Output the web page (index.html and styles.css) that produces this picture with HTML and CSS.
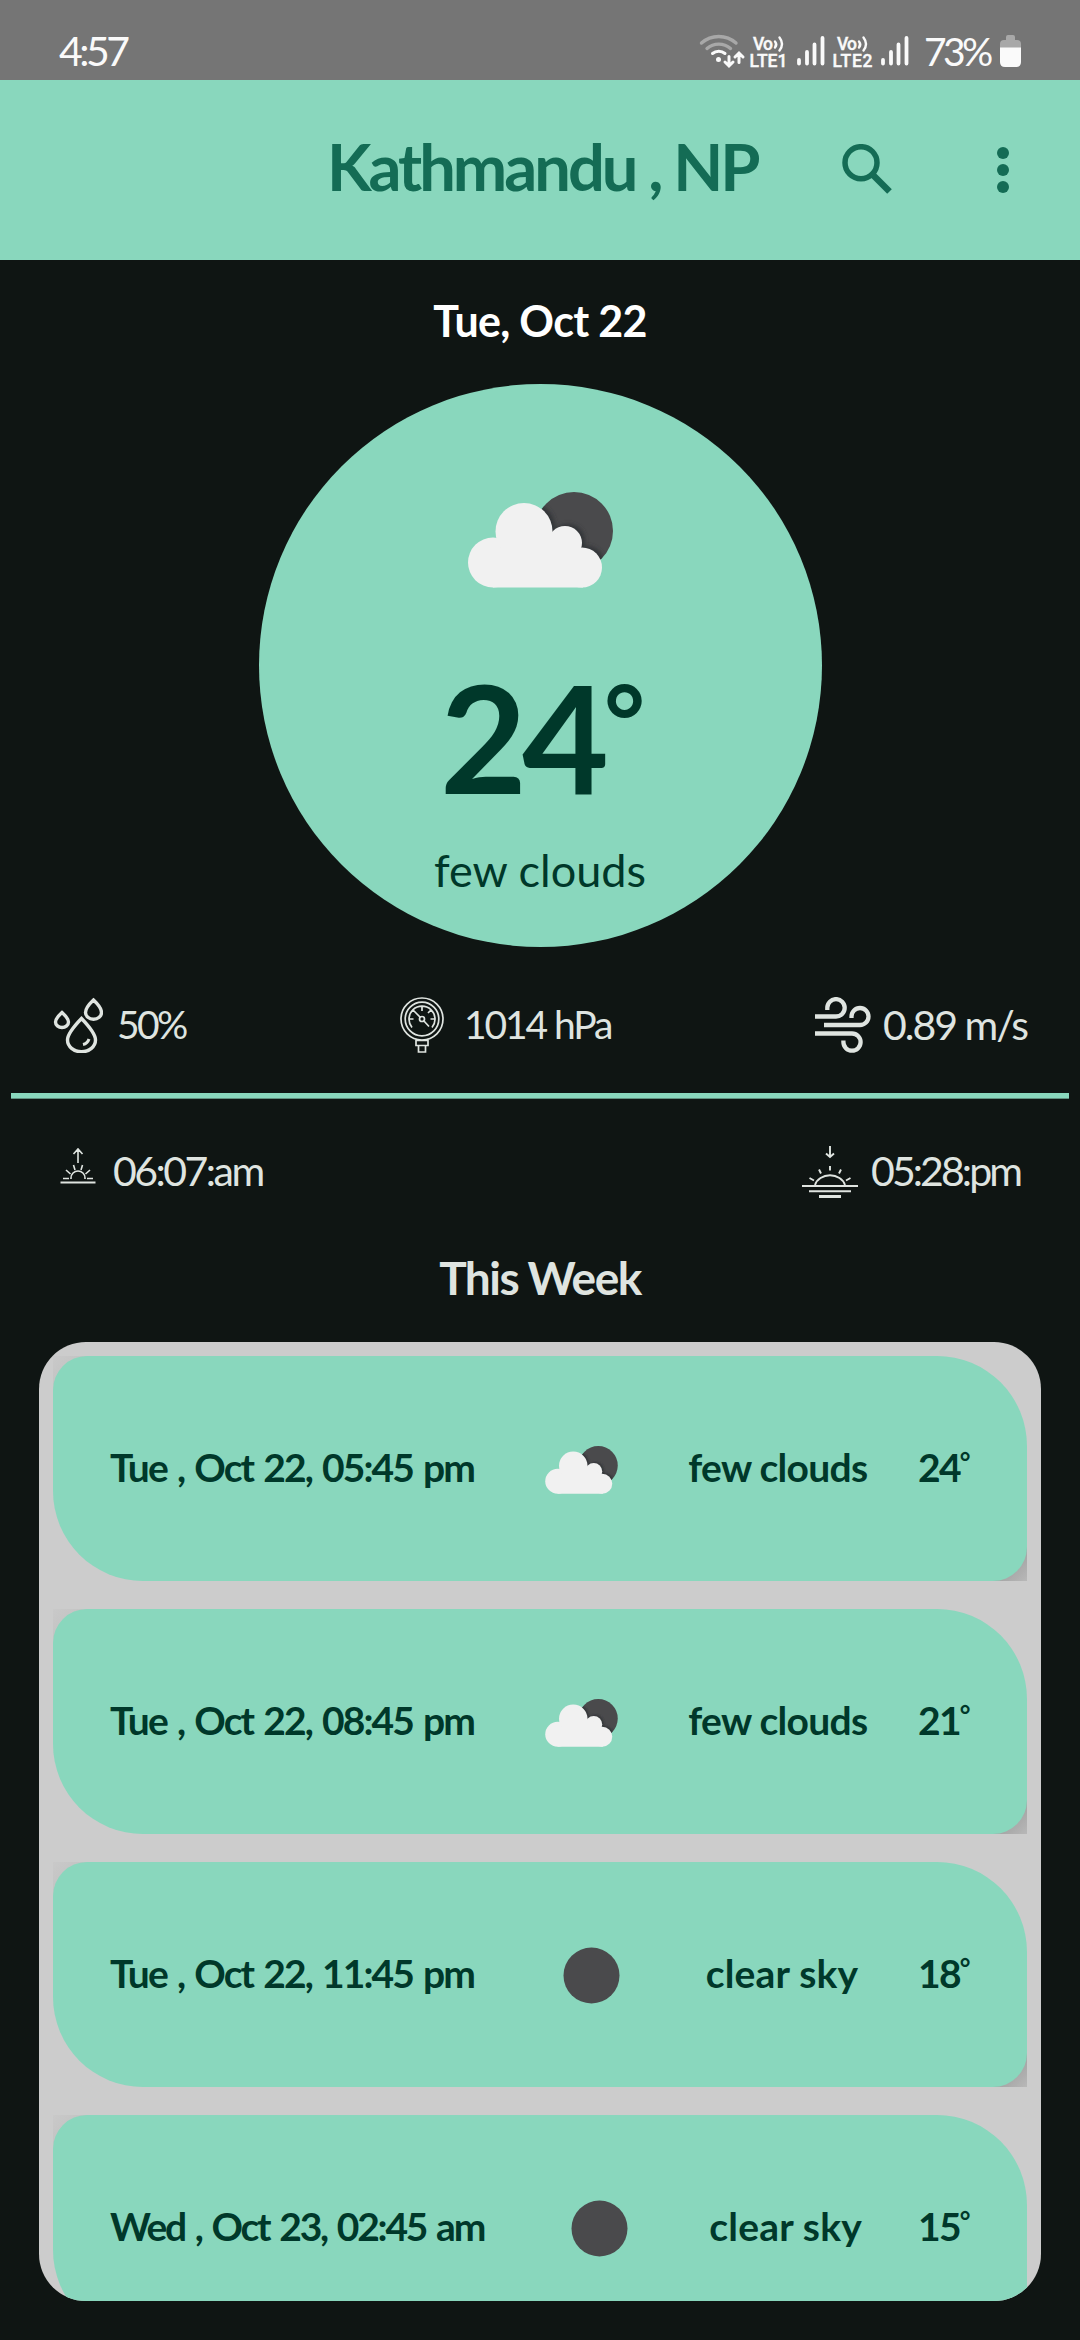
FILE: index.html
```html
<!DOCTYPE html>
<html lang="en">
<head>
<meta charset="utf-8">
<title>Weather</title>
<link rel="stylesheet" href="styles.css">
</head>
<body>
<svg class="defs" aria-hidden="true">
  <defs>
    <clipPath id="moon-clip"><circle cx="106" cy="39" r="39"/></clipPath>
    <filter id="soft"><feGaussianBlur stdDeviation="2"/></filter>
    <g id="cloud-shape">
      <circle cx="25" cy="70.5" r="25"/><circle cx="56" cy="39.5" r="28.5"/>
      <circle cx="97" cy="51" r="17"/><circle cx="114" cy="75.5" r="20"/>
      <path d="M25 95.500V60l40-25 30 10 20 15v35.500z"/>
    </g>
    <symbol id="few" viewBox="0 0 145 96">
      <circle cx="106" cy="39" r="39" fill="#4a4a4c"/>
      <g clip-path="url(#moon-clip)"><use href="#cloud-shape" x="3" y="-2" fill="#333539" filter="url(#soft)"/></g>
      <use href="#cloud-shape" fill="#f1f1f1"/>
    </symbol>
    <symbol id="clear" viewBox="0 0 57 57"><circle cx="28.500" cy="28.500" r="28" fill="#4a4a4c"/></symbol>
  </defs>
</svg>

<div class="status">
  <span class="clock">4:57</span>
  <svg class="signals" viewBox="696 0 216 80" width="216" height="80">
    <g fill="none" stroke-linecap="round" stroke-width="3.400">
      <path d="M701.500 43a26 26 0 0 1 34.500 0M707 48.500a18 18 0 0 1 23.500 0" stroke="#a8a8a8"/>
      <path d="M712.500 53.500a9.500 9.500 0 0 1 12.500 0M729 56.500v9M725 62l4 4 4-4M739 62.500v-9M735 57l4-4 4 4" stroke="#fafafa" stroke-width="3"/>
      <path d="M775 41.500q2.500 3 0 6M779.500 37.500q5 6.500 0 13M859 41.500q2.500 3 0 6M863.500 37.500q5 6.500 0 13" stroke="#fafafa" stroke-width="2.400"/>
      <path d="M799 60v3.500M807 52v11.500M814.500 44.500v19M822.500 38v25.500M883 60v3.500M891 52v11.500M898.500 44.500v19M906.500 38v25.500" stroke="#fafafa" stroke-width="3.800"/>
    </g>
    <circle cx="718.500" cy="59.500" r="2.500" fill="#fafafa"/>
    <g class="lte">
      <text x="753" y="49.500" textLength="20">Vo</text><text x="749.500" y="66.500" textLength="38">LTE1</text>
      <text x="837" y="49.500" textLength="20">Vo</text><text x="832.500" y="66.500" textLength="40">LTE2</text>
    </g>
  </svg>
  <span class="percent">73%</span>
  <svg class="battery" viewBox="0 0 21 32" width="21" height="32">
    <path d="M6 2q0-2 2-2h5q2 0 2 2v3h2q4 0 4 4v4H0V9q0-4 4-4h2z" fill="#a8a8a8"/>
    <path d="M0 12.500h21V27q0 5-5 5H5q-5 0-5-5z" fill="#fafafa"/>
  </svg>
</div>

<header class="appbar">
  <h1 class="city">Kathmandu , NP</h1>
  <svg class="search" viewBox="0 0 50 50" width="50" height="50" fill="none" stroke="#146c55">
    <circle cx="19" cy="18.700" r="16" stroke-width="5.500"/><path d="M31.500 31.500 47.500 47.500" stroke-width="6.500"/>
  </svg>
  <svg class="more" viewBox="0 0 12 46" width="12" height="46" fill="#146c55">
    <circle cx="6" cy="6" r="6"/><circle cx="6" cy="23" r="6"/><circle cx="6" cy="40" r="6"/>
  </svg>
</header>

<main>
  <div class="today">Tue, Oct 22</div>
  <section class="disc">
    <svg class="disc-icon"><use href="#few"/></svg>
    <div class="temp">24<sup>°</sup></div>
    <div class="summary">few clouds</div>
  </section>

  <section class="metrics">
    <div class="metric humidity">
      <svg viewBox="0 0 50 56" width="50" height="56" fill="none" stroke="#dfe4e0" stroke-width="3.400">
        <path d="M28.500 21.500Q14.500 36 14.500 43a14 11.800 0 0 0 28 0Q42.500 36 28.500 21.500z"/>
        <path d="M9 15.500Q2.500 21.500 2.500 25a6.500 5.500 0 0 0 13 0Q15.500 21.500 9 15.500zM40.500 3Q32.500 10.500 32.500 15.500a8 6.800 0 0 0 16 0Q48.500 10.500 40.500 3z"/>
        <path d="M36 42q-1.500 4.500-6 5.500" stroke-width="3"/>
      </svg>
      <span>50%</span>
    </div>
    <div class="metric pressure">
      <svg viewBox="0 0 44 56" width="44" height="56" fill="none" stroke="#dfe4e0" stroke-width="1.700">
        <circle cx="22" cy="22" r="21"/><circle cx="22" cy="22" r="16.800"/>
        <path d="M12 30.500a13 13 0 1 1 20 0M22 9v5M9.500 22h4M34.500 22h-4M13 13l7.500 7.500M31 13l-3 3M23.500 23.500l5.500 6"/>
        <circle cx="22" cy="22" r="2.500"/><path d="M16 43.500h12v5H16zM18.500 48.500h7V55h-7z"/>
      </svg>
      <span>1014 hPa</span>
    </div>
    <div class="metric wind">
      <svg viewBox="0 0 56 56" width="56" height="56" fill="none" stroke="#dfe4e0" stroke-width="4.300">
        <path d="M0 19.500H21a8.700 8.700 0 1 0-8.700-8.700V13M9 28H45a8.500 8.500 0 1 0-8.500-8.500V21M0 36.500H37a8.600 8.600 0 1 1-8.600 8.600V43.500"/>
      </svg>
      <span>0.89 m/s</span>
    </div>
  </section>
  <div class="rule"></div>
  <section class="sun">
    <div class="metric sunrise">
      <svg viewBox="60 1142 36 56" width="36" height="56" fill="none" stroke="#dfe4e0" stroke-width="1.600">
        <path d="M78 1163v-13M73.500 1154l4.500-5 4.500 5M71 1179v-1a7 7 0 0 1 14 0v1M63 1178.500h6M87 1178.500h6M66 1170l4.500 4M90 1170l-4.500 4M73.500 1165l1.500 5M82.500 1165l-1.500 5"/>
        <path d="M60.500 1182.500h35" stroke-width="2"/>
      </svg>
      <span>06:07:am</span>
    </div>
    <div class="metric sunset">
      <svg viewBox="0 -4 56 56" width="56" height="56" fill="none" stroke="#dfe4e0" stroke-width="1.900">
        <path d="M28 0v11M24 7.500l4 3.500 4-3.500M28 20v4.500M17 23.500l2 4M39 23.500l-2 4M7.500 32l4.500 2.500M48.500 32l-4.500 2.500M13 39a15.500 13 0 0 1 30 0M0 40h56M7 45.300h42"/>
        <path d="M17 50.500h22" stroke-width="3"/>
      </svg>
      <span>05:28:pm</span>
    </div>
  </section>

  <h2 class="heading">This Week</h2>
  <section class="week">
    <article class="card">
      <span class="when">Tue , Oct 22, 05:45 pm</span><svg class="icon"><use href="#few"/></svg>
      <span class="desc few">few clouds</span><span class="deg">24<sup>°</sup></span>
    </article>
    <article class="card">
      <span class="when">Tue , Oct 22, 08:45 pm</span><svg class="icon"><use href="#few"/></svg>
      <span class="desc few">few clouds</span><span class="deg">21<sup>°</sup></span>
    </article>
    <article class="card">
      <span class="when">Tue , Oct 22, 11:45 pm</span><svg class="icon moon"><use href="#clear"/></svg>
      <span class="desc clear">clear sky</span><span class="deg">18<sup>°</sup></span>
    </article>
    <article class="card">
      <span class="when wed">Wed , Oct 23, 02:45 am</span><svg class="icon moon"><use href="#clear"/></svg>
      <span class="desc clear">clear sky</span><span class="deg">15<sup>°</sup></span>
    </article>
  </section>
</main>
</body>
</html>
```
FILE: styles.css
```css
* { box-sizing: border-box; }
body {
  margin: 0;
  width: 1080px;
  height: 2340px;
  overflow: hidden;
  background: #0f1513;
  color: #dfe4e0;
  font-family: Lato, "Open Sans", sans-serif;
  white-space: nowrap;
}
svg { display: block; flex: none; }
.defs { position: absolute; width: 0; height: 0; }
sup { font-size: .66em; line-height: 0; vertical-align: .37em; }

.status {
  display: flex;
  height: 80px;
  background: #757575;
  color: #fafafa;
  font-size: 41px;
  line-height: 102px;
}
.clock { width: 637px; margin-left: 59px; letter-spacing: -3.5px; }
.percent { width: 76px; margin-left: 12px; font-size: 39px; letter-spacing: -3.6px; }
.battery { margin-top: 35px; }
.lte { font: 500 17.5px Roboto, sans-serif; fill: #fafafa; stroke: #fafafa; stroke-width: .4px; }

.appbar {
  display: flex;
  align-items: center;
  height: 180px;
  padding-left: 327px;
  background: #89d7bd;
  color: #146c55;
}
.city { width: 514px; margin: 0 0 8px; font-size: 65px; font-weight: 700; letter-spacing: -3px; }
.search { margin: 0 0 2px 1px; }
.more { margin-left: 105px; }

main { display: flex; flex-direction: column; }
.today {
  padding-top: 31px;
  text-align: center;
  color: #fff;
  font-size: 43px;
  font-weight: 700;
  line-height: 60px;
  letter-spacing: -.7px;
}
.disc {
  display: flex;
  flex-direction: column;
  align-items: center;
  align-self: center;
  width: 563px;
  height: 563px;
  margin-top: 33px;
  padding-top: 108px;
  border-radius: 50%;
  background: #89d7bd;
  color: #00382a;
}
.disc-icon { width: 145px; height: 96px; }
.temp { margin-top: 73px; font-size: 150px; font-weight: 700; line-height: 150px; letter-spacing: -5px; }
.summary { margin-top: 34px; font-size: 45px; line-height: 50px; }

.metrics, .sun { display: flex; justify-content: space-between; height: 56px; font-size: 41px; line-height: 55px; }
.metrics { margin: 50px 53px 0; }
.sun { margin: 43px 60px 0; line-height: 58px; }
.metric { display: flex; }
.metric span { letter-spacing: -2.5px; }
.humidity span { width: 79px; margin-left: 14px; font-size: 39px; letter-spacing: -2.6px; }
.pressure span { width: 147px; margin-left: 20px; font-size: 39px; letter-spacing: -2.1px; }
.wind span { width: 144px; margin-left: 12px; letter-spacing: -2px; }
.sunrise span { width: 150px; margin-left: 17px; }
.sunset span { width: 149px; margin-left: 13px; letter-spacing: -2.9px; }
.rule { height: 6px; margin: 40px 11px 0; background: linear-gradient(#89d7bd 5px, #5f9180 5px); }

.heading { margin: 50px 0 34px; text-align: center; font-size: 46px; font-weight: 700; line-height: 60px; letter-spacing: -1.5px; }

.week {
  display: flex;
  flex-direction: column;
  gap: 28px;
  height: 959px;
  margin: 0 39px;
  padding: 14px;
  border-radius: 47px;
  background: #ccc;
  overflow: hidden;
  isolation: isolate;
}
.card {
  position: relative;
  display: flex;
  align-items: center;
  justify-content: space-between;
  flex: none;
  height: 225px;
  padding: 0 60px 0 57px;
  border-radius: 34px 90px 34px 90px;
  background: #89d7bd;
  color: #00382a;
  font-size: 39px;
  font-weight: 700;
}
/* shaded square corners behind the rounded card */
.card::before {
  content: "";
  position: absolute;
  inset: 0;
  z-index: -1;
  background:
    linear-gradient(135deg, #c9c9c9, #bdbdbd) 0 0 / 34px 34px no-repeat,
    linear-gradient(135deg, #a2a2a2 50%, #b8b8b8) 100% 100% / 34px 34px no-repeat;
}
.card span { padding-bottom: 4px; }
.when { width: 365px; letter-spacing: -1.9px; word-spacing: 2.5px; }
.wed { width: 376px; letter-spacing: -2.2px; }
.few { width: 178px; letter-spacing: -.7px; }
.clear { width: 152px; letter-spacing: .2px; }
.deg { width: 49px; letter-spacing: -1.7px; }
.icon { width: 73px; height: 48px; margin: 3px 18.5px 0; }
.icon.moon { width: 57px; height: 57px; margin: 2px 25px 0 28px; }
```
